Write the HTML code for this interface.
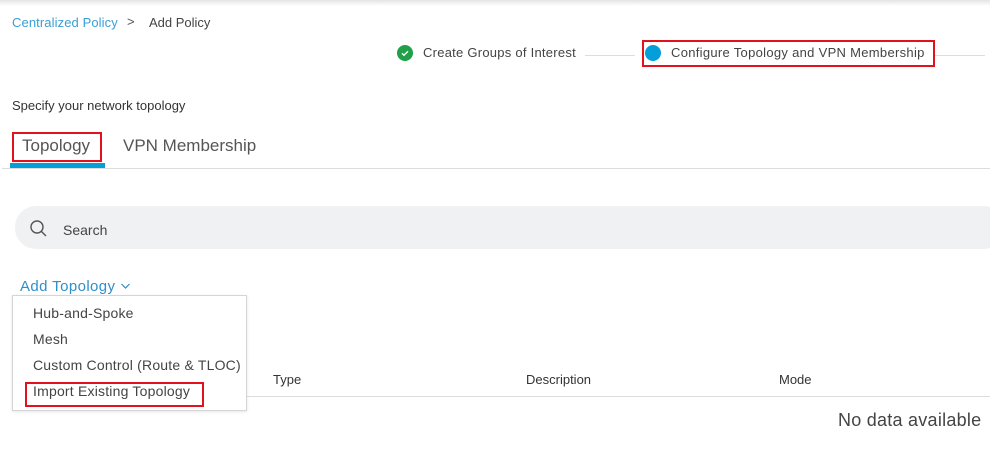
<!DOCTYPE html>
<html><head><style>
*{margin:0;padding:0;box-sizing:border-box}
body{width:990px;height:459px;background:#fff;font-family:"Liberation Sans",sans-serif;position:relative;overflow:hidden;color:#333}
.a{position:absolute;white-space:nowrap}
</style></head><body>
<div class="a" style="left:0;top:0;width:990px;height:6px;background:linear-gradient(#e4e4e4,#fff)"></div>
<div class="a" style="left:12px;top:15px;font-size:13px;color:#3a9fd6;letter-spacing:0.1px">Centralized Policy</div>
<div class="a" style="left:127px;top:14px;font-size:13px;color:#555">&gt;</div>
<div class="a" style="left:149px;top:15px;font-size:13px;color:#444">Add Policy</div>
<div class="a" style="left:397px;top:45px;width:16px;height:16px;border-radius:50%;background:#1fa049"></div>
<svg class="a" style="left:397px;top:45px" width="16" height="16"><path d="M5 8.3l2 2 4-4" stroke="#fff" stroke-width="1.4" fill="none"/></svg>
<div class="a" style="left:423px;top:45px;font-size:13px;color:#444;letter-spacing:0.25px">Create Groups of Interest</div>
<div class="a" style="left:585px;top:55px;width:50px;height:1px;background:#ddd"></div>
<div class="a" style="left:642px;top:40px;width:293px;height:27px;border:2px solid #e3101d"></div>
<div class="a" style="left:645px;top:45px;width:16px;height:16px;border-radius:50%;background:#049fd9"></div>
<div class="a" style="left:671px;top:45px;font-size:13px;color:#444;letter-spacing:0.3px">Configure Topology and VPN Membership</div>
<div class="a" style="left:935px;top:55px;width:50px;height:1px;background:#ddd"></div>
<div class="a" style="left:12px;top:98px;font-size:13px;color:#333">Specify your network topology</div>
<div class="a" style="left:12px;top:132px;width:90px;height:30px;border:2px solid #e3101d"></div>
<div class="a" style="left:22px;top:136px;font-size:17px;color:#555">Topology</div>
<div class="a" style="left:123px;top:136px;font-size:17px;color:#555">VPN Membership</div>
<div class="a" style="left:10px;top:163px;width:95px;height:5px;background:#049fd9"></div>
<div class="a" style="left:2px;top:168px;width:988px;height:1px;background:#ddd"></div>
<div class="a" style="left:15px;top:206px;width:990px;height:43px;border-radius:21px;background:#f0f1f3"></div>
<svg class="a" style="left:29px;top:219px" width="20" height="20"><circle cx="8" cy="8" r="6" stroke="#555" stroke-width="1.4" fill="none"/><path d="M12.5 12.5l4.5 4.5" stroke="#555" stroke-width="1.4"/></svg>
<div class="a" style="left:63px;top:222px;font-size:14px;color:#444">Search</div>
<div class="a" style="left:20px;top:278px;font-size:15px;color:#2f8fc8;letter-spacing:0.4px">Add Topology</div>
<svg class="a" style="left:120px;top:281px" width="12" height="10"><path d="M1.5 3l4 4 4-4" stroke="#2f8fc8" stroke-width="1.2" fill="none"/></svg>
<div class="a" style="left:273px;top:372px;font-size:13px;color:#333">Type</div>
<div class="a" style="left:526px;top:372px;font-size:13px;color:#333">Description</div>
<div class="a" style="left:779px;top:372px;font-size:13px;color:#333">Mode</div>
<div class="a" style="left:246px;top:396px;width:744px;height:1px;background:#ddd"></div>
<div class="a" style="left:838px;top:410px;font-size:18px;color:#444;letter-spacing:0.25px">No data available</div>
<div class="a" style="left:12px;top:295px;width:235px;height:116px;border:1px solid #d5d5d5;background:#fff;box-shadow:0 1px 3px rgba(0,0,0,.1)"></div>
<div class="a" style="left:33px;top:305px;font-size:14px;color:#444;letter-spacing:0.2px">Hub-and-Spoke</div>
<div class="a" style="left:33px;top:331px;font-size:14px;color:#444;letter-spacing:0.2px">Mesh</div>
<div class="a" style="left:33px;top:357px;font-size:14px;color:#444;letter-spacing:0.2px">Custom Control (Route &amp; TLOC)</div>
<div class="a" style="left:25px;top:382px;width:179px;height:25px;border:2px solid #e3101d"></div>
<div class="a" style="left:33px;top:383px;font-size:14px;color:#444;letter-spacing:0.2px">Import Existing Topology</div>
</body></html>
